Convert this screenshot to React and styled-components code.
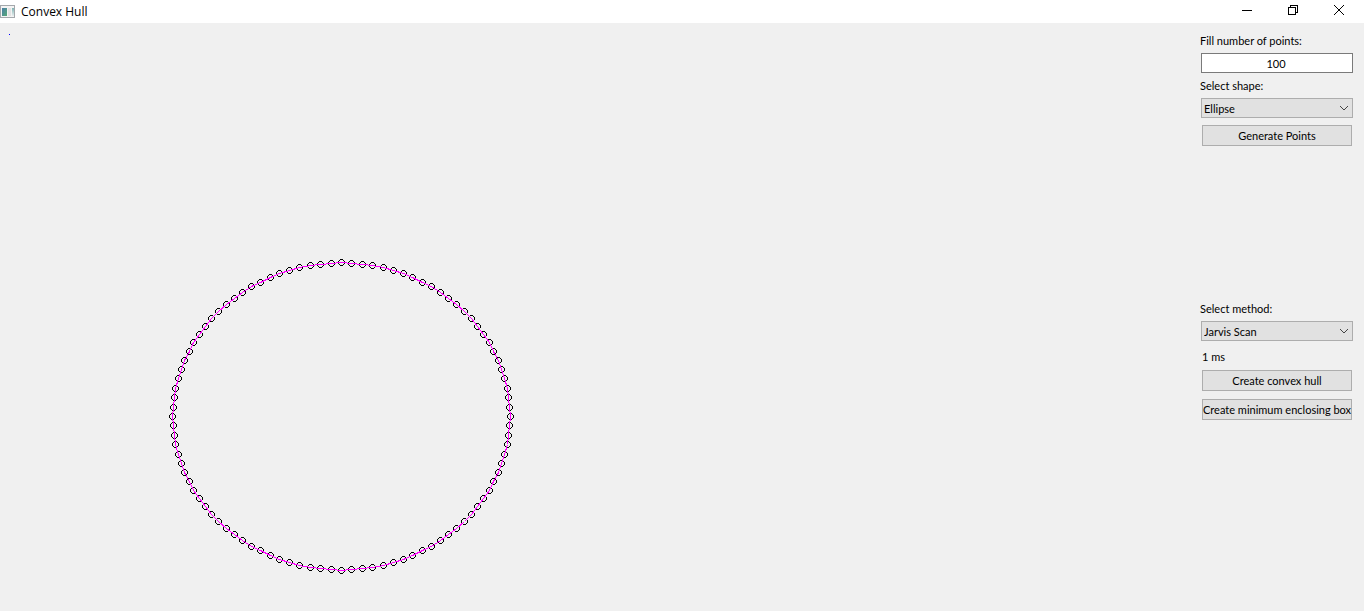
import React from "react";
import styled, { createGlobalStyle } from "styled-components";

const Global = createGlobalStyle`
  *, *::before, *::after { box-sizing: border-box; }
  html, body, #root { height: 100%; }
  body {
    margin: 0;
    background: #f0f0f0;
    color: #000;
    font: 11px/14px Lato, "Liberation Sans", sans-serif;
  }
  button, input, select { font: inherit; color: inherit; }
`;

const Window = styled.div`
  display: flex;
  flex-direction: column;
  min-height: 100%;
`;

const TitleBar = styled.header`
  display: flex;
  align-items: center;
  height: 23px;
  padding-right: 2px;
  background: #fff;
`;

const Title = styled.h1`
  flex: 1;
  margin: 0 0 0 6px;
  font: 12px/22px "Open Sans", "Noto Sans", sans-serif;
`;

const WindowButton = styled.button`
  display: flex;
  align-items: center;
  justify-content: center;
  align-self: flex-start;
  width: 46px;
  height: 20px;
  padding: 0;
  border: 0;
  background: transparent;
`;

const Body = styled.main`
  display: flex;
  flex: 1;
`;

const Canvas = styled.section`
  flex: 1;
  min-width: 0;
`;

const Plot = styled.svg`
  display: block;
  shape-rendering: crispEdges;
`;

const Panel = styled.aside`
  display: flex;
  flex-direction: column;
  gap: 149px;
  width: 164px;
  padding: 11px 11px 0 0;
`;

const Group = styled.form`
  display: flex;
  flex-direction: column;
`;

const Label = styled.label`
  margin-bottom: 5px;
`;

const NumberInput = styled.input`
  height: 20px;
  margin: 0 0 6px 1px;
  padding: 1px 2px 0 0;
  border: 1px solid #7a7a7a;
  background: #fff;
  text-align: center;
`;

const SelectBox = styled.div`
  display: grid;
  align-items: center;
  margin: 0 0 6px 1px;
  > * { grid-area: 1 / 1; }
  > svg { justify-self: end; margin-right: 4px; pointer-events: none; }
`;

const Select = styled.select`
  width: 100%;
  height: 20px;
  padding: 1px 20px 0 2px;
  appearance: none;
  border: 1px solid #adadad;
  border-radius: 0;
  background: #e1e1e1;
`;

const Button = styled.button`
  height: 21px;
  margin: 1px 1px 7px 2px;
  padding: 0;
  border: 1px solid #adadad;
  background: #e1e1e1;
  white-space: nowrap;
`;

const Elapsed = styled.output`
  margin: 3px 2px 5px;
`;

const CENTER = { x: 341, y: 393 };
const RADIUS = { x: 169, y: 154 };
const COUNT = 100;

const points = Array.from({ length: COUNT }, (_, i) => {
  const angle = (2 * Math.PI * i) / COUNT;
  return {
    x: CENTER.x + Math.trunc(RADIUS.x * Math.cos(angle)),
    y: CENTER.y + Math.trunc(RADIUS.y * Math.sin(angle)),
  };
});

const RING = "h3v1h1v1h1v3h-1v1h-1v1h-3v-1h-1v-1h-1v-3h1v-1h1z m0 1v1h-1v3h1v1h3v-1h1v-3h-1v-1z";

const ConvexHull = () => (
  <Plot width="1140" height="580" role="img" aria-label="Convex hull of an ellipse">
    <rect x="9" y="11" width="1" height="1" fill="#00f" />
    {points.map((p, i) => (
      <path key={i} d={`M${p.x - 1} ${p.y - 3}${RING}`} fillRule="evenodd" />
    ))}
    <polygon
      points={points.map((p) => `${p.x + 0.5},${p.y + 0.5}`).join(" ")}
      fill="none"
      stroke="#f0f"
    />
  </Plot>
);

const Chevron = () => (
  <svg width="10" height="6" viewBox="0 0 10 6" aria-hidden="true">
    <path d="M1 1L5 5L9 1" fill="none" stroke="#444" />
  </svg>
);

const AppIcon = () => (
  <svg width="15" height="13" viewBox="0 0 15 13" aria-hidden="true">
    <defs>
      <linearGradient id="screen" x1="0" y1="0" x2="1" y2="1">
        <stop offset="0" stopColor="#4a7fa8" />
        <stop offset="1" stopColor="#56a876" />
      </linearGradient>
      <linearGradient id="side" x1="0" y1="0" x2="0" y2="1">
        <stop offset="0" stopColor="#7fb4b4" />
        <stop offset="1" stopColor="#e8eeee" />
      </linearGradient>
    </defs>
    <rect x="0.5" y="0.5" width="14" height="12" fill="#f4f4f4" stroke="#a4a8ac" />
    <rect x="2" y="3" width="5" height="8" fill="url(#screen)" />
    <rect x="8" y="3" width="3" height="8" fill="#e2e2e2" />
    <rect x="12" y="3" width="2" height="8" fill="url(#side)" />
  </svg>
);

export default function App() {
  return (
    <>
      <Global />
      <Window>
        <TitleBar>
          <AppIcon />
          <Title>Convex Hull</Title>
          <WindowButton aria-label="Minimize">
            <svg width="10" height="10" shapeRendering="crispEdges"><path d="M0 5h10v1H0z" /></svg>
          </WindowButton>
          <WindowButton aria-label="Restore">
            <svg width="10" height="10" shapeRendering="crispEdges">
              <path d="M0.5 2.5h7v7h-7zM2.5 2.5v-2h7v7h-2" fill="none" stroke="#000" />
            </svg>
          </WindowButton>
          <WindowButton aria-label="Close">
            <svg width="10" height="10"><path d="M0 0L10 10M10 0L0 10" stroke="#000" /></svg>
          </WindowButton>
        </TitleBar>
        <Body>
          <Canvas>
            <ConvexHull />
          </Canvas>
          <Panel>
            <Group onSubmit={(e) => e.preventDefault()}>
              <Label htmlFor="count">Fill number of points:</Label>
              <NumberInput id="count" defaultValue="100" />
              <Label htmlFor="shape">Select shape:</Label>
              <SelectBox>
                <Select id="shape">
                  <option>Ellipse</option>
                </Select>
                <Chevron />
              </SelectBox>
              <Button>Generate Points</Button>
            </Group>
            <Group onSubmit={(e) => e.preventDefault()}>
              <Label htmlFor="method">Select method:</Label>
              <SelectBox>
                <Select id="method">
                  <option>Jarvis Scan</option>
                </Select>
                <Chevron />
              </SelectBox>
              <Elapsed>1 ms</Elapsed>
              <Button>Create convex hull</Button>
              <Button>Create minimum enclosing box</Button>
            </Group>
          </Panel>
        </Body>
      </Window>
    </>
  );
}
